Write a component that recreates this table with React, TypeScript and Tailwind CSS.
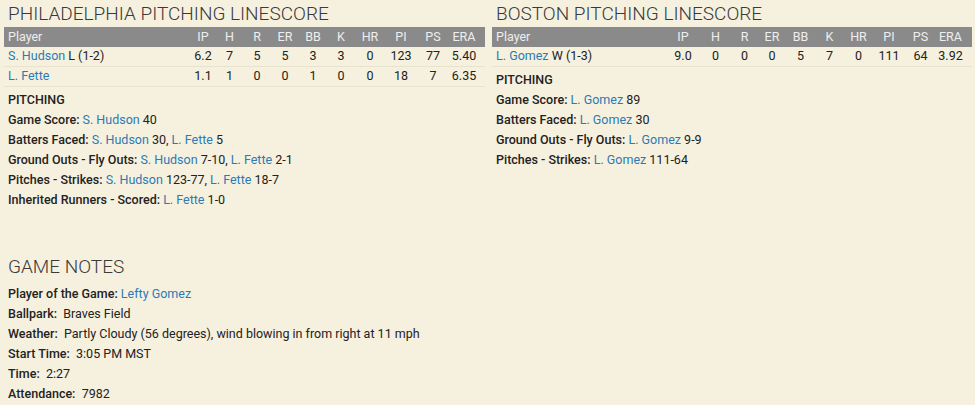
import React from 'react';

type Line = { player: string; note?: string; stats: (string | number)[] };

const phiCols = [26, 27, 28, 28, 28, 28, 30, 32, 32, 30];
const bosCols = [34, 31, 27, 28, 29, 29, 29, 32, 31, 29];
const heads = ['IP', 'H', 'R', 'ER', 'BB', 'K', 'HR', 'PI', 'PS', 'ERA'];

const phiLines: Line[] = [
  { player: 'S. Hudson', note: 'L (1-2)', stats: ['6.2', 7, 5, 5, 3, 3, 0, 123, 77, '5.40'] },
  { player: 'L. Fette', stats: ['1.1', 1, 0, 0, 1, 0, 0, 18, 7, '6.35'] },
];

const bosLines: Line[] = [
  { player: 'L. Gomez', note: 'W (1-3)', stats: ['9.0', 0, 0, 0, 5, 7, 0, 111, 64, '3.92'] },
];

const A: React.FC<{ children: React.ReactNode }> = ({ children }) => (
  <span className="text-[#2a7bb5]">{children}</span>
);

const Linescore: React.FC<{ title: string; lines: Line[]; playerW: number; cols: number[]; padR: number }> = ({
  title,
  lines,
  playerW,
  cols,
  padR,
}) => (
  <div>
    <h2 className="text-[19px] leading-[24px] font-light text-[#3a3a3a] pl-1 pt-[2px] mb-[1px]">
      {title}
    </h2>
    <div className="text-[12.5px]">
      <div className="flex h-[20px] items-center bg-[#8a8a8a] text-[#eeeeee]" style={{ paddingRight: padR }}>
        <div className="pl-1" style={{ width: playerW }}>Player</div>
        {heads.map((h, i) => (
          <div key={h} className="text-center" style={{ width: cols[i] }}>
            {h}
          </div>
        ))}
      </div>
      {lines.map((l) => (
        <div
          key={l.player}
          className="flex h-[20px] items-center border-b border-[#e9e2cd] text-[#222]"
          style={{ paddingRight: padR }}
        >
          <div className="pl-1" style={{ width: playerW }}>
            <A>{l.player}</A>
            {l.note && <span> {l.note}</span>}
          </div>
          {l.stats.map((s, i) => (
            <div key={i} className="text-center" style={{ width: cols[i] }}>
              {s}
            </div>
          ))}
        </div>
      ))}
    </div>
  </div>
);

const Row: React.FC<{ label: string; children?: React.ReactNode }> = ({ label, children }) => (
  <div className="h-[20px] leading-[20px]">
    <span className="font-medium">{label}</span> {children}
  </div>
);

export default function App() {
  return (
    <div
      className="w-[975px] h-[405px] overflow-hidden bg-[#f6f0df] text-[12.5px] text-[#222]"
      style={{ fontFamily: 'Roboto, "Liberation Sans", sans-serif' }}
    >
      <div className="flex">
        <div className="w-[481px] ml-[4px]">
          <Linescore title="PHILADELPHIA PITCHING LINESCORE" lines={phiLines} playerW={186} cols={phiCols} padR={6} />
          <div className="pl-1 mt-[3px]">
            <div className="h-[20px] leading-[20px] font-medium">PITCHING</div>
            <Row label="Game Score:">
              <A>S. Hudson</A> 40
            </Row>
            <Row label="Batters Faced:">
              <A>S. Hudson</A> 30, <A>L. Fette</A> 5
            </Row>
            <Row label="Ground Outs - Fly Outs:">
              <A>S. Hudson</A> 7-10, <A>L. Fette</A> 2-1
            </Row>
            <Row label="Pitches - Strikes:">
              <A>S. Hudson</A> 123-77, <A>L. Fette</A> 18-7
            </Row>
            <Row label="Inherited Runners - Scored:">
              <A>L. Fette</A> 1-0
            </Row>
          </div>
        </div>
        <div className="w-[480px] ml-[7px]">
          <Linescore title="BOSTON PITCHING LINESCORE" lines={bosLines} playerW={174} cols={bosCols} padR={7} />
          <div className="pl-1 mt-[3px]">
            <div className="h-[20px] leading-[20px] font-medium">PITCHING</div>
            <Row label="Game Score:">
              <A>L. Gomez</A> 89
            </Row>
            <Row label="Batters Faced:">
              <A>L. Gomez</A> 30
            </Row>
            <Row label="Ground Outs - Fly Outs:">
              <A>L. Gomez</A> 9-9
            </Row>
            <Row label="Pitches - Strikes:">
              <A>L. Gomez</A> 111-64
            </Row>
          </div>
        </div>
      </div>
      <div className="ml-[8px] mt-[45px]">
        <h2 className="text-[19px] leading-[24px] font-light text-[#3a3a3a] mb-[5px]">GAME NOTES</h2>
        <Row label="Player of the Game:">
          <A>Lefty Gomez</A>
        </Row>
        <Row label="Ballpark:">&nbsp;Braves Field</Row>
        <Row label="Weather:">&nbsp;Partly Cloudy (56 degrees), wind blowing in from right at 11 mph</Row>
        <Row label="Start Time:">&nbsp;3:05 PM MST</Row>
        <Row label="Time:">&nbsp;2:27</Row>
        <Row label="Attendance:">&nbsp;7982</Row>
      </div>
    </div>
  );
}
